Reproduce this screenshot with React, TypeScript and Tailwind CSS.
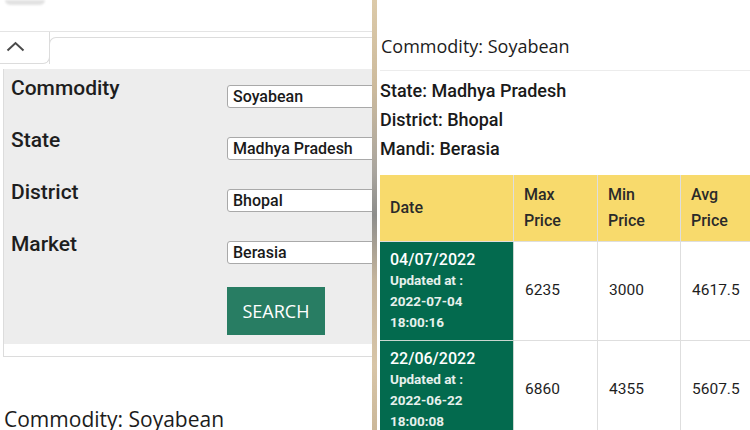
import React from 'react';

const fields = [
  { label: 'Commodity', value: 'Soyabean' },
  { label: 'State', value: 'Madhya Pradesh' },
  { label: 'District', value: 'Bhopal' },
  { label: 'Market', value: 'Berasia' },
];

const rows = [
  { date: '04/07/2022', day: '2022-07-04', time: '18:00:16', max: '6235', min: '3000', avg: '4617.5' },
  { date: '22/06/2022', day: '2022-06-22', time: '18:00:08', max: '6860', min: '4355', avg: '5607.5' },
];

const roboto = "font-['Roboto',sans-serif]";
const openSans = "font-['Open_Sans',sans-serif]";

function SearchForm() {
  return (
    <div className="w-[372px] shrink-0 overflow-hidden bg-white">
      <div className="h-[32px] border-b border-[#e4e4e4]">
        <div className="ml-[5px] h-[5px] w-[40px] rounded-b-full bg-[#e2e2e2] blur-[1px]" />
      </div>

      {/* collapse tab */}
      <div className="flex h-[32px]">
        <div className="flex w-[50px] shrink-0 items-center rounded-br-[7px] border-r border-b border-[#dcdcdc] pl-[6px] pb-[2px]">
          <svg width="19" height="11" viewBox="0 0 19 11" fill="none">
            <polyline points="1.5,9.5 9.5,2 17.5,9.5" stroke="#4a4a4a" strokeWidth="2" />
          </svg>
        </div>
        <div className="-ml-px mt-[5px] flex-1 rounded-tl-[7px] border-t border-l border-[#dcdcdc]" />
      </div>

      <div className="ml-[3px] mt-[5px] border-l border-b border-[#dcdcdc] pb-[12px]">
        <div className={`bg-[#ededed] pt-[7px] pb-[9px] pl-[7px] ${roboto}`}>
          {fields.map((f) => (
            <div key={f.label} className="flex h-[52px]">
              <div className="w-[216px] shrink-0 text-[21px] font-medium leading-[24px] text-[#1e1e1e]">{f.label}</div>
              <div className="mt-[9px] flex h-[23px] w-[170px] shrink-0 items-center rounded-[3px] border border-[#a9a9a9] bg-white pl-[5px] text-[16px] font-medium text-[#1a1a1a]">
                {f.value}
              </div>
            </div>
          ))}
          <div className="ml-[216px] mt-[3px]">
            <button className={`flex h-[48px] w-[98px] items-center justify-center bg-[#287d63] text-[18px] text-white ${openSans}`}>
              SEARCH
            </button>
          </div>
        </div>
      </div>

      <div className={`mt-[48px] pl-[4px] text-[21px] leading-[28px] text-[#1c1c1c] ${openSans}`}>Commodity: Soyabean</div>
    </div>
  );
}

function PriceTable() {
  const cell = 'border-r border-b border-[#dedede]';
  return (
    <div className="flex-1 overflow-hidden bg-white pl-[3px]">
      <div className={`border-b border-[#ececec] pt-[34px] pb-[12px] pl-px text-[18px] leading-[24px] text-[#1c1c1c] ${openSans}`}>
        Commodity: Soyabean
      </div>
      <div className={`pt-[5px] text-[18px] font-medium leading-[29px] text-[#1a1a1a] ${roboto}`}>
        <div>State: Madhya Pradesh</div>
        <div>District: Bhopal</div>
        <div>Mandi: Berasia</div>
      </div>

      <div className={`mt-[12px] grid w-[384px] grid-cols-[134px_84px_83px_83px] ${roboto}`}>
        <div className={`${cell} flex items-center bg-[#f8da6c] pl-[10px] text-[16px] font-medium text-[#2a2a2a]`}>Date</div>
        {['Max', 'Min', 'Avg'].map((h) => (
          <div key={h} className={`${cell} bg-[#f8da6c] px-[10px] py-[7px] text-[16px] font-medium leading-[26px] text-[#2a2a2a]`}>
            <div>{h}</div>
            <div>Price</div>
          </div>
        ))}

        {rows.map((r) => (
          <React.Fragment key={r.date}>
            <div className="border-r border-b border-[#c9d6cf] bg-[#036a4e] py-[7px] pl-[10px] text-white">
              <div className="text-[16px] font-medium leading-[21px]">{r.date}</div>
              <div className="text-[13.5px] font-bold leading-[21px] text-[#e6f0ec]">Updated at :</div>
              <div className="text-[13.5px] font-bold leading-[21px] text-[#e6f0ec]">{r.day}</div>
              <div className="text-[13.5px] font-bold leading-[21px] text-[#e6f0ec]">{r.time}</div>
            </div>
            {[r.max, r.min, r.avg].map((v, i) => (
              <div key={i} className={`${cell} flex items-center pl-[11px] text-[15.5px] text-[#1e1e1e]`}>{v}</div>
            ))}
          </React.Fragment>
        ))}
      </div>
    </div>
  );
}

export default function App() {
  return (
    <div className="flex h-[430px] w-[750px] overflow-hidden bg-white">
      <SearchForm />
      <div className="w-[5px] shrink-0 bg-[linear-gradient(180deg,#dccaa9_0%,#cdbb9d_20%,#a9a59e_40%,#8d8d8b_50%,#c4b49c_65%,#d8c5a7_85%,#cbb89a_100%)]" />
      <PriceTable />
    </div>
  );
}
